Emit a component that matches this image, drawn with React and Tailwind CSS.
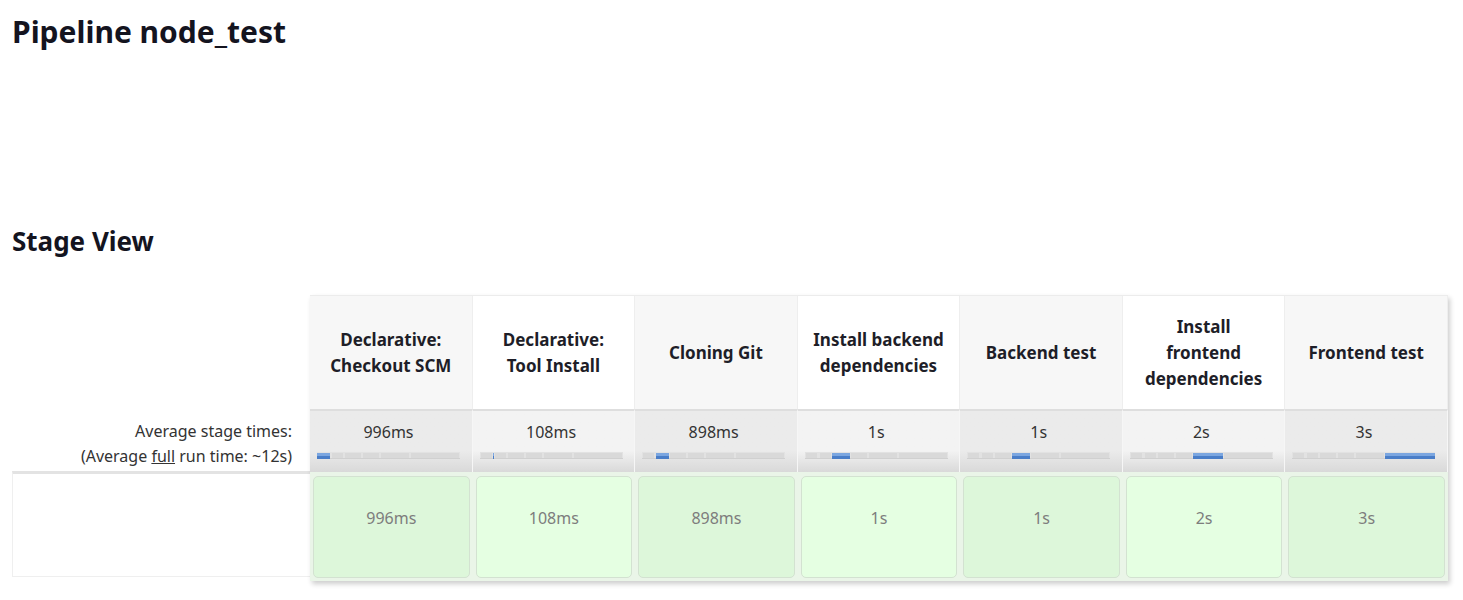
import React from 'react';

const stages = [
    { name: ['Declarative:', 'Checkout SCM'], time: '996ms' },
    { name: ['Declarative:', 'Tool Install'], time: '108ms' },
    { name: ['Cloning Git'], time: '898ms' },
    { name: ['Install backend', 'dependencies'], time: '1s' },
    { name: ['Backend test'], time: '1s' },
    { name: ['Install', 'frontend', 'dependencies'], time: '2s' },
    { name: ['Frontend test'], time: '3s' },
];

// pixel boundaries of each stage inside the 143px timeline bar
const bounds = [0, 13, 14, 27, 45, 63, 93, 143];

function TimeBar({ index }) {
    const x0 = bounds[index];
    const w = Math.max(1, bounds[index + 1] - bounds[index]);
    return (
        <svg width="143" height="7" viewBox="0 0 143 7" className="block">
            <rect x="0" y="0" width="143" height="7" fill="#e2e2e2" />
            {bounds.slice(0, -1).map((b, i) => (
                <rect key={i} x={b + 1} y="1" width={Math.max(0, bounds[i + 1] - b - 2)} height="5" fill="#d9d9d9" />
            ))}
            <rect x="0" y="6" width="143" height="1" fill="#d0d0d0" />
            <rect x={x0} y="1" width={w} height="3" fill="#7ba6e0" />
            <rect x={x0} y="4" width={w} height="3" fill="#4a7ec8" />
        </svg>
    );
}

export default function App() {
    return (
        <div className="min-h-[600px] bg-white pl-[12px] text-[#1f1f1f]" style={{ fontFamily: '"Noto Sans", "Open Sans", sans-serif' }}>
            <h1 className="pt-[14px] text-[30px] font-bold leading-[36px] text-[#14141f]">Pipeline node_test</h1>
            <h2 className="mt-[175px] text-[26px] font-bold leading-[32px] text-[#14141f]">Stage View</h2>

            <div className="mt-[38px] flex">
                {/* left label column */}
                <div className="flex w-[298px] flex-col">
                    <div className="h-[113px]" />
                    <div className="flex h-[63px] flex-col items-end pr-[18px] pt-[11px] text-[16px] leading-[25px] text-[#333]">
                        <span>Average stage times:</span>
                        <span>(Average <span className="underline">full</span> run time: ~12s)</span>
                    </div>
                    <div className="h-[106px] border-t-[3px] border-l border-b border-t-[#e3e3e3] border-l-[#efefef] border-b-[#efefef] bg-white" />
                </div>

                {/* stages */}
                <div className="grid w-[1138px] grid-cols-7 border-t border-[#ececec] shadow-[2px_3px_5px_rgba(0,0,0,0.2)]">
                    {stages.map((s, i) => (
                        <div key={'h' + i} className={`flex h-[113px] flex-col items-center justify-center border-r border-[#eeeeee] text-center text-[17px] font-bold leading-[26px] text-[#1e1e28] ${i % 2 === 0 ? 'bg-[#f7f7f7]' : 'bg-white'}`}>
                            {s.name.map((l) => (
                                <span key={l}>{l}</span>
                            ))}
                        </div>
                    ))}
                    {stages.map((s, i) => (
                        <div key={'a' + i} className={`flex h-[63px] flex-col border-t-2 border-r border-t-[#dedede] border-r-[#f6f6f6] bg-gradient-to-b via-65% to-[#d9d9d9] pl-[7px] pt-[10px] ${i % 2 === 0 ? 'from-[#ebebeb] via-[#ebebeb]' : 'from-[#f3f3f3] via-[#f3f3f3]'}`}>
                            <div className="w-[143px] text-center text-[16px] leading-[22px] text-[#333]">{s.time}</div>
                            <div className="mt-[9px]">
                                <TimeBar index={i} />
                            </div>
                        </div>
                    ))}
                    {stages.map((s, i) => (
                        <div key={'b' + i} className="h-[109px] bg-[#eaf5e8] px-[3px] pb-[3px] pt-[4px]">
                            <div className={`flex h-full justify-center rounded-[5px] border border-[#d3e2d1] pt-[29px] text-[16px] leading-[24px] text-[#7d7d7d] ${i % 2 === 0 ? 'bg-[#ddf7da]' : 'bg-[#e5ffe2]'}`}>
                                {s.time}
                            </div>
                        </div>
                    ))}
                </div>
            </div>
        </div>
    );
}
